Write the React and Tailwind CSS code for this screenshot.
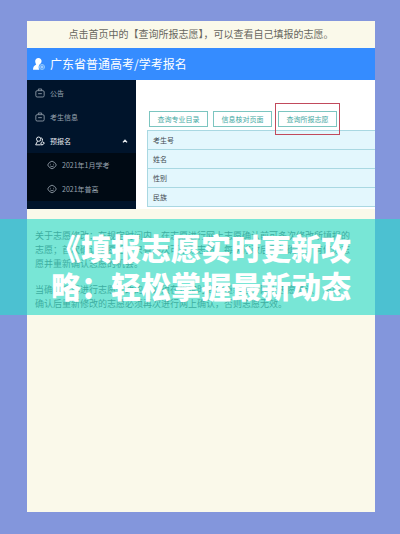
const rows = ["考生号", "姓名", "性别", "民族"];

function BriefcaseIcon() {
  return (
    <svg viewBox="0 0 12 12" className="h-[10px] w-[10px] shrink-0" fill="none" stroke="currentColor" strokeWidth="1" aria-hidden="true">
      <rect x="1" y="3.2" width="10" height="7.6" rx="1.6" />
      <path d="M4 3V1.2h4V3M3.8 6.8h4.4" />
    </svg>
  );
}

function PeopleIcon() {
  return (
    <svg viewBox="0 0 12 12" className="h-[10px] w-[10px] shrink-0" fill="none" stroke="currentColor" strokeWidth="1.2" aria-hidden="true">
      <circle cx="4.4" cy="3.8" r="2.6" />
      <path d="M3 6.2L.8 10.6h6M7.4 2.2a2.3 2.3 0 0 1 1.2 3.6M7 8.2l1.6-1.4 2.6 1.4-1.4 2-2.2.6z" />
    </svg>
  );
}

function FaceIcon() {
  return (
    <svg viewBox="0 0 12 12" className="h-[10px] w-[10px] shrink-0" fill="none" stroke="currentColor" strokeWidth="1" aria-hidden="true">
      <path d="M6 1.4L9.2 3 11.2 6 9 9 6 10.6 3 9 .8 6 2.8 3z" />
      <path d="M3.8 5.2h.8M7.4 5.2h.8M4 7.2c1.2 1 2.8 1 4 0" />
    </svg>
  );
}

function UserPlusIcon() {
  return (
    <svg viewBox="0 0 12 12" className="h-3 w-3 shrink-0" aria-hidden="true">
      <path d="M5.4 0C7.4 0 8.6 1.4 8.6 3.1c0 1-.4 1.9-1 2.5A3.7 3.7 0 0 0 5.6 9c0 1 .2 2 .8 2.8H0C0 9.2 1 7.4 3.2 6.4 2.6 5.6 2.2 4.4 2.2 3.1 2.2 1.4 3.4 0 5.4 0z" fill="#fff" />
      <circle cx="9" cy="9" r="2.5" fill="none" stroke="#a9dcff" strokeWidth=".8" />
      <path d="M9 7.4v3.2M7.4 9h3.2" stroke="#d8f0ff" strokeWidth=".8" />
    </svg>
  );
}

function NavItem({ icon, children }) {
  return (
    <a href="#" className="flex h-6 items-center gap-[5px] px-2">
      {icon}
      {children}
    </a>
  );
}

function TabButton({ children }) {
  return (
    <button type="button" className="block h-4 w-[59px] whitespace-nowrap border border-[#7cc5c0] bg-white text-center text-[7px] leading-[14px] text-[#46aaa4]">
      {children}
    </button>
  );
}

export default function App() {
  return (
    <div lang="zh-CN" className="relative min-h-screen bg-[#8396dc] pt-[21px] pr-[25px] pb-[22px] pl-[27px] font-['Noto_Sans_CJK_SC',sans-serif]">
      <main className="flex min-h-[491px] flex-col bg-[#faf9ea]">
        <p className="h-[27px] whitespace-nowrap text-center text-[10px] leading-[26px] text-[#68675f]">
          点击首页中的【查询所报志愿】，可以查看自己填报的志愿。
        </p>
        <header className="flex h-8 items-center gap-[5px] bg-[#358cff] px-[6px] text-white">
          <UserPlusIcon />
          <h1 className="text-[12px] leading-4">广东省普通高考/学考报名</h1>
        </header>

        <div className="flex bg-white">
          <nav className="flex w-[109px] shrink-0 flex-col bg-[#00142b] pt-px pb-2 text-[7px] text-[#98a3af]">
            <NavItem icon={<BriefcaseIcon />}>公告</NavItem>
            <NavItem icon={<BriefcaseIcon />}>考生信息</NavItem>
            <a href="#" className="flex h-6 items-center gap-[5px] px-2 text-[#e6ebf0]">
              <PeopleIcon />
              预报名
              <svg viewBox="0 0 6 4" className="ml-auto h-1 w-[6px]" fill="none" stroke="currentColor" strokeWidth="1.4" aria-hidden="true">
                <path d="M1 3.4L3 1.2l2 2.2" />
              </svg>
            </a>
            <div className="bg-[#000a14] pl-3">
              <NavItem icon={<FaceIcon />}>2021年1月学考</NavItem>
              <NavItem icon={<FaceIcon />}>2021年普高</NavItem>
            </div>
          </nav>

          <section className="flex min-w-0 flex-1 flex-col justify-end pb-[2px] pl-[11px]">
            <div className="flex items-center pl-[2px]">
              <div className="flex gap-[5px]">
                <TabButton>查询专业目录</TabButton>
                <TabButton>信息核对页面</TabButton>
              </div>
              <div className="relative ml-[3px] border border-[#c14a5c] px-[2px] py-[7px]">
                <TabButton>查询所报志愿</TabButton>
              </div>
            </div>
            <table className="-mt-[5px] w-full border-collapse text-left text-[7px] text-[#3f4b52]">
              <tbody>
                {rows.map((row) => (
                  <tr key={row} className="h-[19px] border-y border-l border-[#a9d8e2] bg-[#e3f7fd]">
                    <th scope="row" className="py-0 pl-[5px] font-normal leading-[14px]">{row}</th>
                  </tr>
                ))}
              </tbody>
            </table>
          </section>
        </div>

        <article className="px-2 pt-5 text-[9px] leading-[14px] whitespace-nowrap text-[#5c5e55]">
          <p>
            关于志愿修改：在规定时间内，在志愿进行网上志愿确认前可多次修改所填报的
            <br />
            志愿；首次确认志愿后，只有两次可修改志愿，每次修改后重新确认，有修改志
            <br />
            愿并重新确认志愿的机会。
          </p>
          <p className="mt-3">
            当确认后再进行志愿修改的，必须在规定时间内重新进行网上志愿确认，志愿
            <br />
            确认后重新修改的志愿必须再次进行网上确认，否则志愿无效。
          </p>
        </article>
      </main>

      <div className="absolute inset-x-0 top-[219px] flex h-24 items-center justify-center bg-[#2cdbca]/63 pb-[3px]">
        <h2 className="pl-[2px] text-[30px] leading-[38px] font-black text-white">
          《填报志愿实时更新攻
          <br />
          略：轻松掌握最新动态
        </h2>
      </div>
    </div>
  );
}
